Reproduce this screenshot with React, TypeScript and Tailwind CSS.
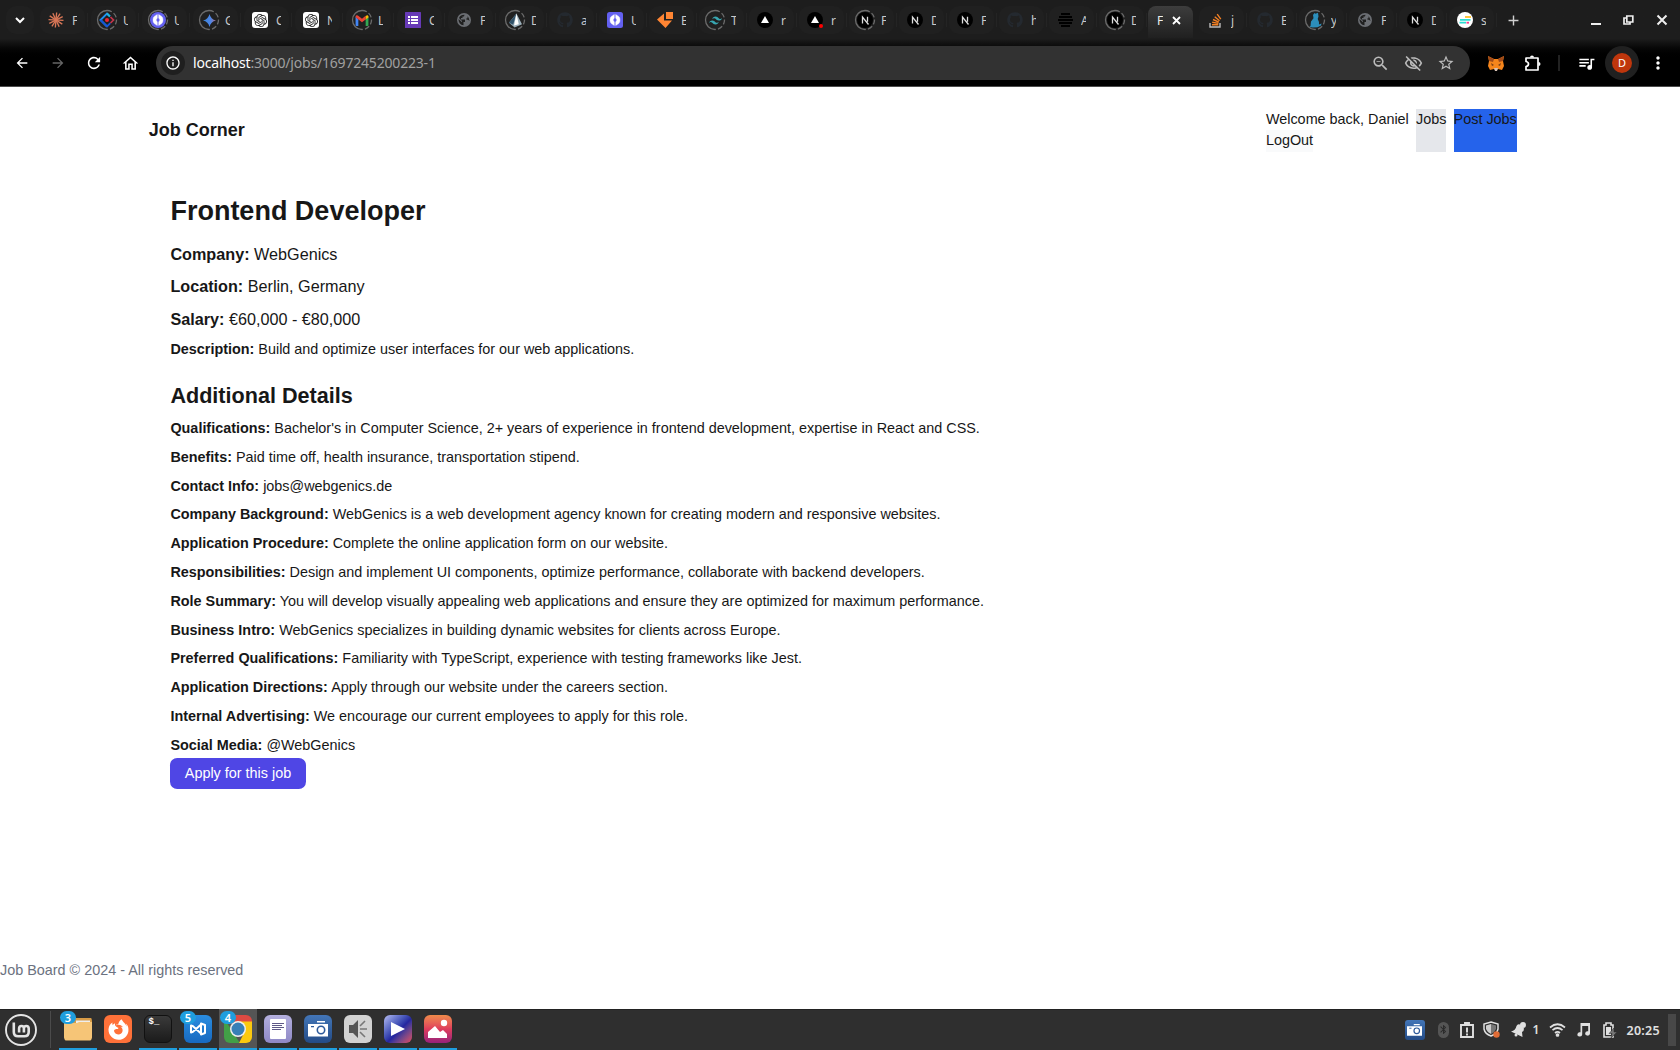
import type { ReactNode } from "react";
import {
  MdAdd, MdArrowBack, MdArrowForward, MdMoreVert, MdOutlineExtension,
  MdOutlineHome, MdOutlineInfo, MdOutlineVisibilityOff, MdPublic, MdQueueMusic, MdRefresh,
  MdStarBorder, MdZoomOut, MdBluetooth,
} from "react-icons/md";
import { FaFirefoxBrowser, FaGithub } from "react-icons/fa6";
import { SiOpenai, SiTailwindcss } from "react-icons/si";

const Claude = () => (
  <svg width="16" height="16" viewBox="0 0 16 16" stroke="#d97757" strokeWidth="1.35">
    {[0, 28, 58, 88, 118, 150].map((a) => (
      <line key={a} x1="8" y1="0.5" x2="8" y2="15.5" transform={`rotate(${a + 5} 8 8)`} />
    ))}
  </svg>
);
const Diamond = () => (
  <svg width="16" height="16" viewBox="0 0 16 16" fill="none">
    <path d="M8 14.5 1.5 8 8 1.5 11 4.5" stroke="#2091f3" strokeWidth="1.9" />
    <path d="M8 1.5 10.8 4.3" stroke="#22b8d8" strokeWidth="1.9" />
    <path d="M1.500 8 8 14.5 11.3 11.2" stroke="#1557d6" strokeWidth="1.9" />
    <path d="M11.5 5 14.5 8 11.5 11" stroke="#c5354b" strokeWidth="1.7" />
    <circle cx="8" cy="8" r="2" fill="#ee2233" />
  </svg>
);
const Brackets = ({ round }: { round?: boolean }) => (
  <svg width="16" height="16" viewBox="0 0 16 16">
    <rect width="16" height="16" rx={round ? 8 : 2.5} fill="#6360f0" />
    <path d="M7.3 2.5 4.3 4.4Q3 5.3 3 8t1.3 3.6l3 1.9V10L6 8l1.3-2ZM8.7 2.5l3 1.9Q13 5.3 13 8t-1.3 3.6l-3 1.9V10L10 8 8.700 6Z" fill="#fff" stroke="#fff" strokeWidth=".4" />
  </svg>
);
const Gemini = () => (
  <svg width="13" height="13" viewBox="0 0 16 16">
    <defs>
      <linearGradient id="gem" x1="0" y1="0" x2="1" y2="0">
        <stop offset="0" stopColor="#3a86d8" /><stop offset=".6" stopColor="#4f86e8" /><stop offset="1" stopColor="#b0708a" />
      </linearGradient>
    </defs>
    <path d="M8 0Q9.500 6.500 16 8 9.500 9.500 8 16 6.500 9.500 0 8 6.500 6.500 8 0Z" fill="url(#gem)" />
  </svg>
);
const OpenAI = () => (
  <span className="flex size-4 items-center justify-center rounded-[3px] bg-white text-[#222]"><SiOpenai size={13} /></span>
);
const Gmail = () => (
  <svg width="14" height="11" viewBox="0 0 14 12">
    <path d="M0 1.500V11q0 1 1 1h2V4.800Z" fill="#4285f4" />
    <path d="M11 4.800V12h2q1 0 1-1V1.500Z" fill="#34a853" />
    <path d="M0 2.500V1.500Q.6-.5 2.500.6L7 4 11 .9V5L7 8 0 2.500Z" fill="#ea4335" />
    <path d="M11 5V1Q13.500-.8 14 1.500v1.200Z" fill="#fbbc04" />
  </svg>
);
const Forms = () => (
  <svg width="16" height="16" viewBox="0 0 16 16">
    <rect width="16" height="16" rx=".5" fill="#673ab7" />
    <path d="M3 4h2v2H3zm3 0h7v2H6zM3 7h2v2H3zm3 0h7v2H6zM3 10h2v2H3zm3 0h7v2H6z" fill="#fff" />
  </svg>
);
const Globe = () => (
  <svg width="14" height="14" viewBox="0 0 14 14">
    <circle cx="7" cy="7" r="7" fill="#6b6e73" />
    <path d="M7.500 1.800 7 3.500H5.500V5H4v1.500h4V9H6.500v3.300A5.500 5.500 0 0 1 1.600 6L5 9.300V8L2 5Q3.300 1.800 7.500 1.800ZM10.500 3.200q2 1.800 2 4.800l-1.500-1.200H9.500V5.200h1Z" fill="#202020" />
  </svg>
);
const Prisma = () => (
  <svg width="13" height="15" viewBox="0 0 14 15">
    <path d="M8 0 14 11.500 6 15 0 10Z" fill="#9cb0bb" /><path d="M8 0 0 10l4.500 2Z" fill="#315269" /><path d="M8 0 5.500 13 10.500 11.500Z" fill="#fff" />
  </svg>
);
const Github = () => <FaGithub size={16} className="text-[#24292f]" />;
const Envelope = () => (
  <svg width="16" height="16" viewBox="0 0 16 16" fill="#ff8533">
    <path d="M9 0h7v7H9zM7 1.500V8.500h8L8.500 16 0 7.500Z" />
  </svg>
);
const Tailwind = () => <SiTailwindcss size={13} className="text-[#38a7b2]" />;
const Vercel = ({ dot }: { dot?: boolean }) => (
  <svg width="16" height="16" viewBox="0 0 16 16">
    <circle cx="8" cy="8" r="8" fill="#000" /><path d="M8 4 12 11H4Z" fill="#fff" />
    {dot && <circle cx="14" cy="14" r="2" fill="#f00" />}
  </svg>
);
const Next = () => (
  <svg width="16" height="16" viewBox="0 0 16 16">
    <circle cx="8" cy="8" r="8" fill="#000" />
    <path d="M5.500 11.500V5l6 7.500M10.500 4.800v5" stroke="#ddd" strokeWidth="1.300" fill="none" />
  </svg>
);
const Stripes = () => (
  <svg width="15" height="16" viewBox="0 0 15 16" stroke="#000" strokeWidth="2.100">
    <path d="M3 2h9M1 5h13M0 8h15M1 11h13M3 14h9" />
  </svg>
);
const Cat = () => (
  <svg width="13" height="16" viewBox="0 0 13 16" fill="#2c8ebb">
    <path d="M5.500 1 6.500 1.800 9 .8 9.500 4.500 8.700 7Q10.500 10 10 12.500L12.500 11.500 12 13.500 8.500 15.200 4 15.500.5 15 1.500 14 2 9.500 4.500 6.200 4 3Z" />
  </svg>
);
const Stack = () => (
  <svg width="13" height="16" viewBox="0 0 13 16" fill="none">
    <path d="M1 11v4h10v-4" stroke="#bcbbbb" strokeWidth="1.400" />
    <path d="M3 12.700h6.300M3.200 10.200l6.200 1.200M4 7.500l5.800 2.700M5.700 4.700l4.800 4M8.200 2.200l3.600 5" stroke="#f48024" strokeWidth="1.400" />
  </svg>
);
const Bars = () => (
  <svg width="16" height="16" viewBox="0 0 16 16">
    <circle cx="8" cy="8" r="8" fill="#fff" />
    <path d="M8 5h6" stroke="#ffc53d" strokeWidth="2" /><path d="M3 7.800h10.500M2.500 10.700H9" stroke="#2bdcd2" strokeWidth="1.800" /><path d="M9.500 10.700H12" stroke="#ff3d8b" strokeWidth="1.800" />
  </svg>
);

type Tab = { icon: ReactNode; label: string; ring?: boolean };
const before: Tab[] = [
  { icon: <Claude />, label: "F" },
  { icon: <Diamond />, label: "U", ring: true },
  { icon: <Brackets round />, label: "U", ring: true },
  { icon: <Gemini />, label: "G", ring: true },
  { icon: <OpenAI />, label: "C" },
  { icon: <OpenAI />, label: "N" },
  { icon: <Gmail />, label: "L", ring: true },
  { icon: <Forms />, label: "C" },
  { icon: <Globe />, label: "F" },
  { icon: <Prisma />, label: "D", ring: true },
  { icon: <Github />, label: "a" },
  { icon: <Brackets />, label: "U" },
  { icon: <Envelope />, label: "E" },
  { icon: <Tailwind />, label: "T", ring: true },
  { icon: <Vercel />, label: "r" },
  { icon: <Vercel dot />, label: "r" },
  { icon: <Next />, label: "F", ring: true },
  { icon: <Next />, label: "D" },
  { icon: <Next />, label: "F" },
  { icon: <Github />, label: "h" },
  { icon: <Stripes />, label: "A" },
  { icon: <Next />, label: "D", ring: true },
];
const after: Tab[] = [
  { icon: <Stack />, label: "j" },
  { icon: <Github />, label: "E" },
  { icon: <Cat />, label: "y", ring: true },
  { icon: <Globe />, label: "F" },
  { icon: <Next />, label: "D" },
  { icon: <Bars />, label: "s" },
];

function TabItem({ tab, wide }: { tab: Tab; wide?: boolean }) {
  return (
    <div className={`flex shrink-0 ${wide ? "w-[51px]" : "w-[50px]"}`}>
      <div className="flex h-7 w-[45px] items-center rounded-[10px] bg-[#202020] pl-1.5">
        <span className="relative flex size-5 shrink-0 items-center justify-center">
          {tab.icon}
          {tab.ring && (
            <svg className="absolute" width="22" height="22" viewBox="0 0 22 22" fill="none" stroke="#6b6b6b" strokeWidth="1.300">
              <path d="M11 1.500a9.500 9.500 0 0 0 0 19" />
              <path d="M11 1.500a9.500 9.500 0 0 1 0 19" strokeDasharray="5 2.200" />
            </svg>
          )}
        </span>
        <span className="ml-[6px] mt-px w-[5px] overflow-hidden whitespace-nowrap text-[12px] text-[#c8c8c8]">{tab.label}</span>
      </div>
      <span className="ml-[2px] mt-[7px] h-3.5 w-px bg-[#242424]" />
    </div>
  );
}

function Browser() {
  return (
    <div className="h-[87px] border-b border-[#4c4c4c] bg-linear-to-b from-[#1d1d1d] from-45% to-black to-70% font-['Noto_Sans',sans-serif]">
      <div className="flex h-[46px] pt-1.5">
        <div className="ml-1.5 mr-1.5 flex size-7 items-center justify-center rounded-[10px] bg-[#202020] text-white">
          <svg width="10" height="7" viewBox="0 0 10 7" fill="none" stroke="currentColor" strokeWidth="2"><path d="M1 1l4 4 4-4" /></svg>
        </div>
        {before.map((t, i) => <TabItem key={i} tab={t} wide={i < 9} />)}
        <div className="-ml-px mr-[6px] flex h-8 w-[45px] shrink-0 items-center rounded-t-[8px] bg-linear-to-b from-[#3d3d3d] to-[#202020] pb-1 pl-[9px] text-[12px] text-[#eee]">
          <span className="mt-px w-[6px] overflow-hidden whitespace-nowrap">F</span>
          <svg className="ml-[9px]" width="9" height="9" viewBox="0 0 9 9" stroke="#fff" strokeWidth="1.800"><path d="M1 1l7 7m0-7L1 8" /></svg>
        </div>
        {after.map((t, i) => <TabItem key={i} tab={t} />)}
        <div className="flex size-7 items-center justify-center text-[#d0d0d0]"><MdAdd size={17} /></div>
        <div className="ml-auto mr-3 flex h-7 items-center gap-[22px] text-[#eee]">
          <span className="mt-[7px] h-[2px] w-2.5 bg-current" />
          <svg width="11" height="10" viewBox="0 0 11 10" fill="none" stroke="currentColor" strokeWidth="1.700"><path d="M3.800 1h6v6h-6zM3 3H1v6h6V7.500" /></svg>
          <svg width="12" height="12" viewBox="0 0 12 12" stroke="currentColor" strokeWidth="2"><path d="M1.500 1.500l9 9m0-9l-9 9" /></svg>
        </div>
      </div>
      <div className="flex h-[34px] items-center text-white">
        <div className="flex w-[156px] shrink-0 gap-5 pl-[14px]">
          <MdArrowBack size={16} /><MdArrowForward size={16} className="text-[#666]" /><MdRefresh size={16} className="scale-115" /><MdOutlineHome size={17} className="scale-110" />
        </div>
        <div className="flex h-[34px] w-[1314px] shrink-0 items-center rounded-full bg-[#323232]">
          <span className="ml-[5px] flex size-6 items-center justify-center rounded-full bg-[#1f1f1f]"><MdOutlineInfo size={16} /></span>
          <span className="-mt-0.5 ml-2 text-[14px] tracking-[-0.19px] text-[#a0a0a0]"><span className="text-white">localhost</span>:3000/jobs/1697245200223-1</span>
          <div className="ml-auto mr-[15px] flex items-center gap-[14px] text-[#bcbcbc]"><MdZoomOut size={19} /><MdOutlineVisibilityOff size={19} /><MdStarBorder size={18} /></div>
        </div>
        <svg className="ml-[18px]" width="16" height="15" viewBox="0 0 16 15">
          <path d="M0 0 6 3h4l6-3-1 5 1 5-2 4-4-1-2 2-2-2-4 1-2-4 1-5Z" fill="#f6851b" />
          <path d="M0 0 6 3 5 6 1 5ZM16 0 10 3l1 3 4-1Z" fill="#a04a18" />
          <path d="m3 7 3 2-2 1ZM13 7l-3 2 2 1Z" fill="#763d16" /><path d="M6 12h4l-1 3H7Z" fill="#d7c1b3" />
        </svg>
        <svg className="ml-[20px]" width="18" height="17" viewBox="0 0 18 17" fill="none" stroke="currentColor" strokeWidth="1.700">
          <path d="M2 3h12v12H2v-3.500q2.500-.5 2.500-2.500T2 6.500Z" strokeLinejoin="round" />
          <path d="M6 2.500a2 2 0 0 1 4 0ZM14.500 7a2 2 0 0 1 0 4Z" fill="currentColor" stroke="none" />
        </svg>
        <span className="ml-[16px] h-4 w-0.5 bg-[#222]" />
        <MdQueueMusic size={19} className="ml-[17px]" />
        <span className="ml-[9px] flex size-[34px] items-center justify-center rounded-full bg-[#202020]">
          <span className="flex size-5 items-center justify-center rounded-full bg-[#bf360c] text-[11px]">D</span>
        </span>
        <MdMoreVert size={20} className="ml-[9px]" />
      </div>
    </div>
  );
}

const details: [string, string][] = [
  ["Qualifications", "Bachelor's in Computer Science, 2+ years of experience in frontend development, expertise in React and CSS."],
  ["Benefits", "Paid time off, health insurance, transportation stipend."],
  ["Contact Info", "jobs@webgenics.de"],
  ["Company Background", "WebGenics is a web development agency known for creating modern and responsive websites."],
  ["Application Procedure", "Complete the online application form on our website."],
  ["Responsibilities", "Design and implement UI components, optimize performance, collaborate with backend developers."],
  ["Role Summary", "You will develop visually appealing web applications and ensure they are optimized for maximum performance."],
  ["Business Intro", "WebGenics specializes in building dynamic websites for clients across Europe."],
  ["Preferred Qualifications", "Familiarity with TypeScript, experience with testing frameworks like Jest."],
  ["Application Directions", "Apply through our website under the careers section."],
  ["Internal Advertising", "We encourage our current employees to apply for this role."],
  ["Social Media", "@WebGenics"],
];

function Page() {
  return (
    <main className="flex flex-1 flex-col bg-white text-[14.4px] leading-[21.6px] text-[#171717]">
      <div className="mx-auto w-[1382.4px]">
        <header className="mt-[21.6px] flex h-[43.2px] items-center justify-between pr-[14.4px]">
          <div className="pt-0.5 text-[18px] font-bold">Job Corner</div>
          <nav className="flex gap-[7.2px] self-stretch">
            <div><div>Welcome back, Daniel</div><button className="block bg-[#f9fafb]">LogOut</button></div>
            <a className="bg-[#e5e7eb]">Jobs</a>
            <a className="bg-[#2563eb]">Post Jobs</a>
          </nav>
        </header>
        <section className="px-[21.6px] pt-[43.2px]">
          <h1 className="mb-[14.4px] text-[27px] font-bold leading-[32.4px]">Frontend Developer</h1>
          <div className="text-[16.2px] leading-[25.2px]">
            <p className="mb-[7.2px]"><strong>Company:</strong> WebGenics</p>
            <p className="mb-[7.2px]"><strong>Location:</strong> Berlin, Germany</p>
            <p className="mb-[7.2px]"><strong>Salary:</strong> €60,000 - €80,000</p>
          </div>
          <p><strong>Description:</strong> Build and optimize user interfaces for our web applications.</p>
          <h2 className="mb-[7.2px] mt-[21.6px] text-[21.6px] font-bold leading-[28.8px]">Additional Details</h2>
          {details.map(([k, v]) => <p key={k} className="mb-[7.2px]"><strong>{k}:</strong> {v}</p>)}
          <a className="rounded-[7.2px] bg-[#4f46e5] px-[14.4px] py-[7.2px] text-white">Apply for this job</a>
        </section>
      </div>
      <footer className="mb-[27px] mt-auto text-[#6b7280]">Job Board © 2024 - All rights reserved</footer>
    </main>
  );
}

function Tile({ children, bg, badge, active, running = true }: { children?: ReactNode; bg?: string; badge?: string; active?: boolean; running?: boolean }) {
  return (
    <div className={`relative flex h-[41px] w-[38px] shrink-0 justify-center pt-[6px] ${active ? "bg-[#555]" : ""} ${running ? "border-b-2 border-[#1f9ede]" : ""}`}>
      <span className={`flex size-7 items-center justify-center overflow-hidden rounded-[6px] text-white ${bg ?? ""}`}>{children}</span>
      {badge && <span className="absolute left-px top-[2px] flex h-[13px] w-4 items-center justify-center rounded-full bg-[#1f9ede] text-[11px] font-semibold leading-none text-white">{badge}</span>}
    </div>
  );
}

const Camera = ({ s }: { s: number }) => (
  <svg width={s} height={s * 0.8} viewBox="0 0 20 16">
    <path d="M9 0h8v1.500H9zM0 3h20v12.500H0z" fill="#fff" /><circle cx="13" cy="9" r="3.700" fill="#fff" stroke="#2d5a9b" strokeWidth="1.600" /><path d="M3 5h3v1.200H3z" fill="#2d5a9b" />
  </svg>
);

function Taskbar() {
  return (
    <div className="flex h-[41px] shrink-0 items-center bg-[#2f2f2f] font-['Noto_Sans',sans-serif] shadow-[inset_0_1px_#222]">
      <div className="flex w-[50px] justify-center pr-2">
        <svg width="32" height="32" viewBox="0 0 32 32" fill="none" stroke="#e4e4e4" strokeWidth="2.600">
          <circle cx="16" cy="16" r="15" strokeWidth="1.900" />
          <path d="M8.800 8.500v9.500q0 4.300 4.300 4.300h6.300q4.300 0 4.300-4.300v-3.500q0-2.500-2.400-2.500t-2.400 2.500v4m0-4q0-2.500-2.400-2.500t-2.400 2.500v4" />
        </svg>
      </div>
      <span className="mr-[8px] h-[37px] w-px bg-[#4b4b4b]" />
      <div className="flex gap-0.5">
        <Tile badge="3">
          <svg width="28" height="28" viewBox="0 0 28 28"><path d="M0 3h28v20H0z" fill="#d79b47" /><path d="M12 5.500h14v3H12z" fill="#eee" /><path d="M0 8h13l2-1h13v18.500H0z" fill="#f6c577" /></svg>
        </Tile>
        <Tile running={false} bg="bg-[#ff7139]"><FaFirefoxBrowser size={21} /></Tile>
        <Tile bg="border border-[#111] bg-linear-to-b from-[#3a3a3a] to-[#1b1b1b]">
          <span className="-mt-3 mb-0 mr-2 font-['Liberation_Mono',monospace] text-[9px] font-bold">$_</span>
        </Tile>
        <Tile badge="5" bg="bg-linear-to-b from-[#2a8de0] to-[#1769c0]">
          <svg width="16" height="14" viewBox="0 0 16 14" fill="none" stroke="#fff" strokeWidth="2"><path d="M1 3.500v7l2-.7L11 2.500V11.500L3 4.200ZM11 1.500 15 3v8l-4 1.500Z" strokeLinejoin="round" /></svg>
        </Tile>
        <Tile badge="4" active>
          <svg width="28" height="28" viewBox="0 0 28 28">
            <path d="M0 0h28v9H0z" fill="#df4a42" /><path d="M0 3 10 19 16 28H0Z" fill="#42a047" /><path d="M14 6.500h14v21.500H15l6-12Z" fill="#fbc90f" />
            <circle cx="14" cy="14" r="8" fill="#eee" /><circle cx="14" cy="14" r="6.500" fill="#377fb7" />
          </svg>
        </Tile>
        <Tile bg="bg-linear-to-b from-[#b4b0de] to-[#8e88c6]">
          <svg width="16" height="20" viewBox="0 0 16 20"><rect width="16" height="20" rx="1" fill="#fff" /><path d="M2 4.500h12M2 6.500h10M2 8.500h12M2 10.500h9" stroke="#5e5886" /></svg>
        </Tile>
        <Tile bg="bg-linear-to-b from-[#4376b8] to-[#234b86]"><Camera s={20} /></Tile>
        <Tile bg="bg-[#d2d2d2]">
          <svg width="20" height="20" viewBox="0 0 20 20"><path d="M1 6h4l5-5v18l-5-5H1z" fill="#555" /><path d="M12 7l5-5M12 10h7M12 13l5 5" stroke="#777" strokeWidth="1.600" /></svg>
        </Tile>
        <Tile bg="bg-linear-135 from-[#b9bdf2] via-[#2525a0] via-55% to-[#e54458]">
          <svg width="14" height="16" viewBox="0 0 14 16"><path d="M0 1 14 8 0 15Z" fill="#fff" /></svg>
        </Tile>
        <Tile bg="bg-linear-to-b from-[#ef8a4a] via-[#df3d5b] to-[#971f79]">
          <svg width="22" height="20" viewBox="0 0 22 20" fill="#fff"><circle cx="17" cy="4" r="3.200" /><path d="M1 19v-6l7-6 5 6 3-2 4 4v4Z" /></svg>
        </Tile>
      </div>
      <div className="ml-auto mr-1 flex h-full items-center text-[#e0e0e0]">
        <span className="mr-[13px] flex size-5 items-center justify-center rounded-[3px] bg-linear-to-b from-[#4376b8] to-[#234b86]"><Camera s={15} /></span>
        <span className="mr-[11px] flex h-4 w-[11px] items-center justify-center rounded-full bg-[#555] text-[#292929]"><MdBluetooth size={13} /></span>
        <svg className="mr-[9px]" width="14" height="16" viewBox="0 0 14 16" fill="none" stroke="currentColor" strokeWidth="1.900"><path d="M1 3h12v12H1zM5 3V1h4v2M7 5.500v5M7 11.500v2" /></svg>
        <svg className="mr-[11px]" width="17" height="17" viewBox="0 0 17 17"><path d="M8 1 15 3v5q-1 5-7 7Q2 13 1 8V3Z" fill="none" stroke="currentColor" strokeWidth="1.500" /><path d="M8 3v10Q4 11 3 8V4.500Z" fill="#ccc" /><path d="M8 3v10q4-2 5-5V4.500Z" fill="#777" /><circle cx="13.500" cy="13.500" r="3.200" fill="#e06c36" /></svg>
        <svg className="mr-[7px]" width="15" height="15" viewBox="0 0 15 15" fill="currentColor"><path d="M0 9.500Q4.500 8.500 5.500 4 6.500 1.500 9 2.500L13 6.500Q13 9.500 11 10L11.500 15Z" /><circle cx="12" cy="3" r="3" /><circle cx="5" cy="13" r="1.500" /></svg>
        <span className="mr-[10px] text-[12px] font-semibold">1</span>
        <svg className="mr-[10px]" width="17" height="14" viewBox="0 0 17 14" fill="none" stroke="currentColor" strokeWidth="1.700"><path d="M1 4.500Q8.500-2 16 4.500M3.500 7.200q5-4.400 10 0M6 10q2.500-2.200 5 0" /><circle cx="8.500" cy="12" r="1" fill="currentColor" /></svg>
        <svg className="mr-[13px]" width="14" height="14" viewBox="0 0 14 14" fill="currentColor"><path d="M4.500 0H14v10.500a2.400 2.200 0 1 1-1.800-2.200V3H6.200v8.500a2.400 2.200 0 1 1-1.700-2.200Z" /></svg>
        <svg className="mr-[9px]" width="14" height="16" viewBox="0 0 14 16"><path d="M1 3h2V1h5v2h2v12H1z" fill="none" stroke="currentColor" strokeWidth="1.600" /><path d="M3 5h5v8H3z" fill="currentColor" /><path d="M11 6 6 11.500h3L8 16l6-6h-3z" fill="#777" stroke="#2f2f2f" strokeWidth=".5" /></svg>
        <span className="mr-[8px] mt-[3px] text-[12.5px] font-semibold tracking-[.3px]">20:25</span>
        <span className="h-8 w-2 bg-[#484848]" />
      </div>
    </div>
  );
}

export default function App() {
  return (
    <div className="flex h-[1050px] w-[1680px] flex-col overflow-hidden font-['Liberation_Sans',Arial,sans-serif]">
      <Browser />
      <Page />
      <Taskbar />
    </div>
  );
}
